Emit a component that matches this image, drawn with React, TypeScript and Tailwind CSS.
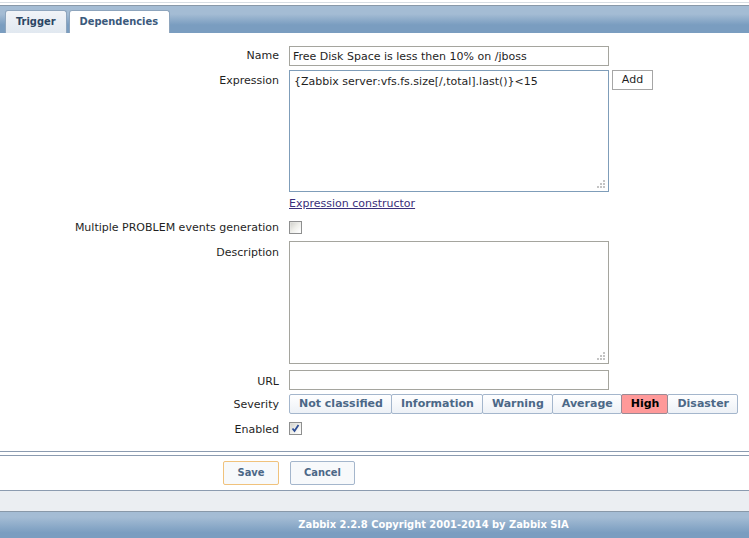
import { useState } from 'react';

const SEVERITIES = ['Not classified', 'Information', 'Warning', 'Average', 'High', 'Disaster'];

function Grip() {
  // small dotted resize grip in the bottom-right corner of a textarea
  return (
    <svg className="absolute right-[3px] bottom-[3px]" width="9" height="9" viewBox="0 0 9 9" aria-hidden="true">
      <g fill="#c4c4c4">
        <rect x="6" y="0" width="2" height="2" />
        <rect x="3" y="3" width="2" height="2" />
        <rect x="6" y="3" width="2" height="2" />
        <rect x="0" y="6" width="2" height="2" />
        <rect x="3" y="6" width="2" height="2" />
        <rect x="6" y="6" width="2" height="2" />
      </g>
    </svg>
  );
}

function Check({ checked, onClick }: { checked: boolean; onClick: () => void }) {
  return (
    <button
      onClick={onClick}
      className="relative w-[13px] h-[13px] border border-[#8e8f8f] bg-gradient-to-br from-[#dcdcd7] to-white p-0"
      aria-pressed={checked}
    >
      <span className="absolute inset-[1px] bg-gradient-to-br from-[#d4d4cf] via-[#efefea] to-white" />
      {checked && (
        <svg className="absolute left-[1px] top-[1px]" width="9" height="9" viewBox="0 0 9 9">
          <path d="M1.5 4.5 L3.5 7 L7.5 1" stroke="#2e4e96" strokeWidth="1.8" fill="none" />
        </svg>
      )}
    </button>
  );
}

function Row({ label, children, labelPad = 'pt-[3px]' }: { label?: string; children: React.ReactNode; labelPad?: string }) {
  return (
    <div className="flex">
      <div className={`w-[279px] shrink-0 text-right whitespace-nowrap ${labelPad}`}>{label}</div>
      <div className="ml-[10px]">{children}</div>
    </div>
  );
}

export default function App() {
  const [severity, setSeverity] = useState('High');
  const [multiple, setMultiple] = useState(false);
  const [enabled, setEnabled] = useState(true);
  const [tab, setTab] = useState('Trigger');

  return (
    <div className="w-[749px] h-[538px] bg-white text-[11px] leading-[14px] text-[#1f1f1f] font-['DejaVu_Sans',sans-serif] overflow-hidden">
      {/* Tab strip */}
      <div className="h-[2px] bg-white" />
      <div className="h-[1px] bg-[#d7dde3]" />
      <div className="h-[2px] bg-white" />
      <div className="h-[28px] border-t border-[#8898a8] bg-gradient-to-b from-[#a4bcd4] from-30% to-[#7a9dc0] to-70% flex items-end pl-[5px] gap-[2px]">
        {['Trigger', 'Dependencies'].map((t) => (
          <button
            key={t}
            onClick={() => setTab(t)}
            className={`h-[23px] px-[10px] rounded-t-[3px] border border-b-0 border-[#8ea5bd] font-bold text-[11px] font-['DejaVu_Sans_Condensed',sans-serif] ${
              t === tab ? 'bg-gradient-to-b from-[#f1f4f8] to-[#e1e8f0] text-[#2a4563]' : 'bg-white text-[#3b5a7c] pr-[11px]'
            }`}
          >
            {t}
          </button>
        ))}
      </div>

      {/* Form */}
      <div className="pt-[13px] flex flex-col">
        <Row label="Name">
          <input
            defaultValue="Free Disk Space is less then 10% on /jboss"
            className="w-[320px] h-[20px] border border-[#a5a59e] px-[3px] text-[11px] outline-none"
          />
        </Row>

        <div className="mt-[4px]">
          <Row label="Expression" labelPad="pt-[4px]">
            <div className="flex items-start gap-[3px]">
              <div className="relative">
                <textarea
                  defaultValue="{Zabbix server:vfs.fs.size[/,total].last()}<15"
                  className="block w-[320px] h-[122px] border border-[#7f9db9] px-[4px] pt-[4px] text-[11px] leading-[14px] resize-none outline-none"
                />
                <Grip />
              </div>
              <button className="w-[41px] h-[20px] border border-[#a6a6a6] bg-white text-[11px]">Add</button>
            </div>
          </Row>
        </div>

        <div className="mt-[5px]">
          <Row>
            <a href="#" className="text-[#3a2f7a] underline leading-[14px]">Expression constructor</a>
          </Row>
        </div>

        <div className="mt-[10px]">
          <Row label="Multiple PROBLEM events generation" labelPad="pt-0">
            <Check checked={multiple} onClick={() => setMultiple((p) => !p)} />
          </Row>
        </div>

        <div className="mt-[4px]">
          <Row label="Description" labelPad="pt-[5px]">
            <div className="relative">
              <textarea className="block w-[320px] h-[123px] border border-[#a5a59e] resize-none outline-none" />
              <Grip />
            </div>
          </Row>
        </div>

        <div className="mt-[6px]">
          <Row label="URL" labelPad="pt-[5px]">
            <input className="w-[320px] h-[20px] border border-[#a5a59e] outline-none" />
          </Row>
        </div>

        <div className="mt-[4px]">
          <Row label="Severity" labelPad="pt-[4px]">
            <div className="flex">
              {SEVERITIES.map((s) => (
                <button
                  key={s}
                  onClick={() => setSeverity(s)}
                  className={`h-[20px] pl-[9px] pr-[8px] -ml-px first:ml-0 border font-bold text-[11px] rounded-[2px] ${
                    s === severity
                      ? 'relative bg-[#ff9999] border-[#9a8a95] text-black'
                      : 'bg-gradient-to-b from-white to-[#edf1f6] border-[#a4b6cc] text-[#4c6887]'
                  }`}
                >
                  {s}
                </button>
              ))}
            </div>
          </Row>
        </div>

        <div className="mt-[8px]">
          <Row label="Enabled" labelPad="pt-px">
            <Check checked={enabled} onClick={() => setEnabled((p) => !p)} />
          </Row>
        </div>
      </div>

      {/* Buttons */}
      <div className="mt-[13px] border-t border-[#8b9bb0]" />
      <div className="mt-[3px] border-t border-[#8b9bb0] h-[35px] flex items-center pl-[223px] gap-[11px]">
        <button className="w-[56px] h-[24px] border border-[#f0c27c] rounded-[2px] bg-[#f7f9fb] text-[#4c6887] font-bold text-[11px] font-['DejaVu_Sans_Condensed',sans-serif]">
          Save
        </button>
        <button className="w-[65px] h-[24px] border border-[#a4b6cc] rounded-[2px] bg-[#f7f9fb] text-[#4c6887] font-bold text-[11px] font-['DejaVu_Sans_Condensed',sans-serif]">
          Cancel
        </button>
      </div>
      <div className="border-t border-[#8b9bb0] h-[21px] bg-[#ebeef2]" />
      <div className="h-[27px] border-t border-[#8898a8] bg-gradient-to-b from-[#a4bcd4] from-20% to-[#7a9dc0] to-80% flex items-center justify-center pl-[118px] text-white font-bold text-[11px] font-['DejaVu_Sans_Condensed',sans-serif]">
        Zabbix 2.2.8 Copyright 2001-2014 by Zabbix SIA
      </div>
    </div>
  );
}
